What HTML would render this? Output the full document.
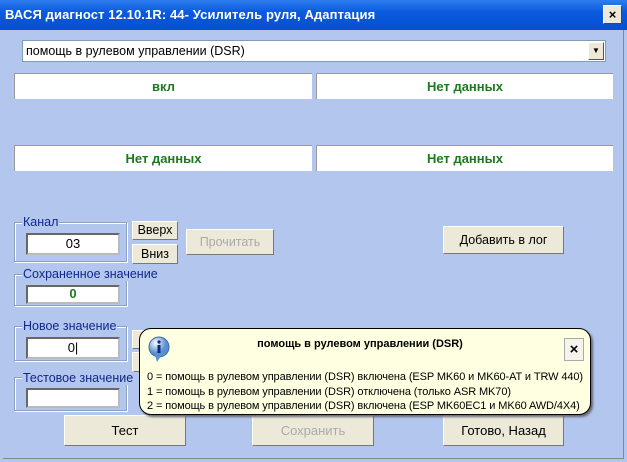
<!DOCTYPE html><html><head><meta charset="utf-8"><style>
*{box-sizing:border-box;margin:0;padding:0}
body{width:627px;height:462px;overflow:hidden;background:#b3c7ee;font-family:"Liberation Sans",sans-serif;font-size:12px;position:relative}
.a{position:absolute}
.title{left:0;top:0;width:627px;height:30px;background:linear-gradient(#2f7df0,#0a5ade 40%,#0650d0);color:#fff;font-weight:bold;font-size:13px;padding:7px 0 0 5px;letter-spacing:0.1px}
.x{left:603px;top:5px;width:19px;height:19px;background:#ece9d8;border:1px solid #fff;border-right-color:#444;border-bottom-color:#444;color:#000;font-weight:bold;font-size:13px;text-align:center;line-height:17px}
.frame{left:0;top:30px;width:627px;height:432px;border:3px solid #b3c7ee;border-top:0;box-shadow:inset -1px -1px 0 #888}
.combo{left:22px;top:40px;width:584px;height:22px;background:#fff;border:1px solid #7f9db9;padding:3px 3px;font-size:12.5px}
.dd{right:1px;top:1px;width:16px;height:18px;background:#ece9d8;border:1px solid #fff;border-right-color:#555;border-bottom-color:#555;font-size:8px;text-align:center;line-height:16px}
.box{background:#fff;color:#1d7a1d;font-weight:bold;font-size:13px;text-align:center;line-height:26px;height:26px;border-top:1px solid #999;border-left:1px solid #999}
.grp{border:1px solid #8ea0c0;box-shadow:1px 1px 0 #fff inset,1px 1px 0 #fff}
.lbl{background:#b3c7ee;color:#102888;font-size:12.5px;padding:0 1px}
.inp{background:#fff;border:2px inset #bbb;text-align:center;font-size:13px;line-height:17px}
.btn{background:#ece9d8;border:1px solid #fff;border-right-color:#777;border-bottom-color:#777;text-align:center;font-size:12.5px}
.dis{color:#aaa}
.tip{left:139px;top:328px;width:452px;height:87px;background:#ffffe1;border:1px solid #000;border-radius:12px;box-shadow:2px 2px 2px #667}
</style></head><body>
<div class="a title">ВАСЯ диагност 12.10.1R: 44- Усилитель руля, Адаптация</div>
<div class="a x">×</div>
<div class="a frame"></div>
<div class="a combo">помощь в рулевом управлении (DSR)<div class="a dd">▼</div></div>
<div class="a box" style="left:14px;top:73px;width:298px">вкл</div>
<div class="a box" style="left:316px;top:73px;width:297px">Нет данных</div>
<div class="a box" style="left:14px;top:145px;width:298px">Нет данных</div>
<div class="a box" style="left:316px;top:145px;width:297px">Нет данных</div>

<div class="a grp" style="left:14px;top:222px;width:113px;height:40px"></div>
<div class="a lbl" style="left:22px;top:215px">Канал</div>
<div class="a inp" style="left:26px;top:233px;width:94px;height:22px">03</div>
<div class="a btn" style="left:132px;top:221px;width:46px;height:19px;line-height:17px">Вверх</div>
<div class="a btn" style="left:132px;top:244px;width:46px;height:20px;line-height:18px">Вниз</div>
<div class="a btn dis" style="left:186px;top:229px;width:88px;height:26px;line-height:24px">Прочитать</div>
<div class="a btn" style="left:443px;top:226px;width:121px;height:28px;line-height:26px">Добавить в лог</div>

<div class="a grp" style="left:14px;top:274px;width:113px;height:32px"></div>
<div class="a lbl" style="left:22px;top:267px">Сохраненное значение</div>
<div class="a inp" style="left:26px;top:285px;width:94px;height:19px;color:#1d7a1d;font-weight:bold;line-height:14px">0</div>

<div class="a grp" style="left:14px;top:326px;width:113px;height:35px"></div>
<div class="a lbl" style="left:22px;top:319px">Новое значение</div>
<div class="a inp" style="left:26px;top:337px;width:94px;height:22px">0|</div>
<div class="a btn" style="left:132px;top:330px;width:46px;height:19px"></div>
<div class="a btn" style="left:132px;top:352px;width:46px;height:20px"></div>

<div class="a grp" style="left:14px;top:377px;width:113px;height:34px"></div>
<div class="a lbl" style="left:22px;top:371px">Тестовое значение</div>
<div class="a inp" style="left:26px;top:388px;width:94px;height:20px"></div>

<div class="a btn" style="left:64px;top:415px;width:122px;height:31px;line-height:29px;font-size:13px">Тест</div>
<div class="a btn dis" style="left:252px;top:415px;width:122px;height:31px;line-height:29px;font-size:13px">Сохранить</div>
<div class="a btn" style="left:443px;top:415px;width:121px;height:31px;line-height:29px;font-size:13px">Готово, Назад</div>

<div class="a tip">
<svg class="a" style="left:8px;top:7px" width="22" height="28" viewBox="0 0 22 28"><defs><radialGradient id="g" cx="35%" cy="30%"><stop offset="0" stop-color="#fff"/><stop offset="1" stop-color="#5a8fd0"/></radialGradient></defs><circle cx="11" cy="11" r="10" fill="url(#g)" stroke="#3a6ab0"/><path d="M7 19 L9 26 L13 20Z" fill="#5a8fd0"/><circle cx="11" cy="6" r="1.6" fill="#0a2a80"/><rect x="9.5" y="9" width="3" height="8" fill="#0a2a80"/></svg>
<div class="a" style="left:0;width:390px;top:9px;text-align:center;font-weight:bold;font-size:11px;padding-left:50px">помощь в рулевом управлении (DSR)</div>
<div class="a" style="left:424px;top:9px;width:20px;height:23px;border:1px solid #aaa;background:#f4f4ec;font-weight:bold;font-size:15px;text-align:center;line-height:21px">×</div>
<div class="a" style="left:7px;top:41px;font-size:11px;line-height:14.5px;letter-spacing:-0.1px;white-space:nowrap">0 = помощь в рулевом управлении (DSR) включена (ESP MK60 и MK60-AT и TRW 440)<br>1 = помощь в рулевом управлении (DSR) отключена (только ASR MK70)<br>2 = помощь в рулевом управлении (DSR) включена (ESP MK60EC1 и MK60 AWD/4X4)</div>
</div>
</body></html>
